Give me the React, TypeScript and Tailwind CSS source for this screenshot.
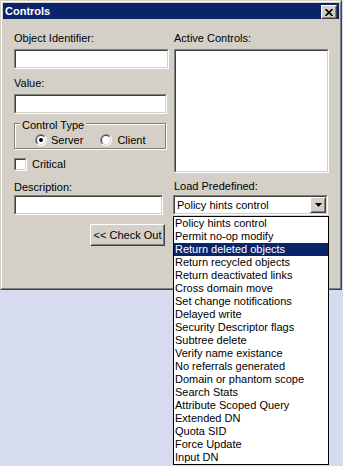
import React from "react";

const items = [
  "Policy hints control",
  "Permit no-op modify",
  "Return deleted objects",
  "Return recycled objects",
  "Return deactivated links",
  "Cross domain move",
  "Set change notifications",
  "Delayed write",
  "Security Descriptor flags",
  "Subtree delete",
  "Verify name existance",
  "No referrals generated",
  "Domain or phantom scope",
  "Search Stats",
  "Attribute Scoped Query",
  "Extended DN",
  "Quota SID",
  "Force Update",
  "Input DN",
];

function Sunken({ className = "", children }: { className?: string; children?: React.ReactNode }) {
  return (
    <div className={`border border-t-[#808080] border-l-[#808080] border-b-white border-r-white ${className}`}>
      <div className="h-full border border-t-[#404040] border-l-[#404040] border-b-[#d4d0c8] border-r-[#d4d0c8] bg-white">
        {children}
      </div>
    </div>
  );
}

function Raised({ className = "", children }: { className?: string; children?: React.ReactNode }) {
  return (
    <div className={`border border-t-white border-l-white border-b-[#404040] border-r-[#404040] bg-[#d4d0c8] ${className}`}>
      <div className="h-full border border-t-[#d4d0c8] border-l-[#d4d0c8] border-b-[#808080] border-r-[#808080] flex items-center justify-center">
        {children}
      </div>
    </div>
  );
}

function Radio({ checked, id }: { checked?: boolean; id: string }) {
  return (
    <svg width="12" height="12" viewBox="0 0 12 12" className="shrink-0">
      <defs>
        <clipPath id={id}>
          <polygon points="0,0 12,0 0,12" />
        </clipPath>
      </defs>
      <circle cx="6" cy="6" r="6" fill="#ffffff" />
      <circle cx="6" cy="6" r="6" fill="#808080" clipPath={`url(#${id})`} />
      <circle cx="6" cy="6" r="5" fill="#d4d0c8" />
      <circle cx="6" cy="6" r="5" fill="#404040" clipPath={`url(#${id})`} />
      <circle cx="6" cy="6" r="4" fill="#ffffff" />
      {checked && <circle cx="6" cy="6" r="2" fill="#000000" />}
    </svg>
  );
}

export default function App() {
  return (
    <div className="w-[343px] h-[466px] overflow-hidden bg-[#d6dbf0] font-['Tahoma','Liberation_Sans',sans-serif] text-[11px] leading-[13px] text-black">
      {/* window frame */}
      <div className="w-[342px] h-[290px] border border-t-[#d4d0c8] border-l-[#d4d0c8] border-b-[#404040] border-r-[#404040]">
        <div className="h-full border border-t-white border-l-white border-b-[#808080] border-r-[#808080] bg-[#d4d0c8] p-px flex flex-col">
          <div className="h-[16px] bg-[#0a246a] flex items-center justify-between pl-[2px] pr-[2px]">
            <span className="text-white font-bold leading-[16px]">Controls</span>
            <Raised className="w-[16px] h-[14px] mt-[2px]">
              <svg width="8" height="7" viewBox="0 0 8 7">
                <path d="M0.5 0 L7.5 7 M7.5 0 L0.5 7" stroke="#000" strokeWidth="1.6" />
              </svg>
            </Raised>
          </div>

          <div className="flex pl-[11px] pt-[13px]">
            {/* left column */}
            <div className="flex flex-col w-[159px]">
              <span>Object Identifier:</span>
              <Sunken className="mt-[4px] w-[155px] h-[20px]" />
              <span className="mt-[8px]">Value:</span>
              <Sunken className="mt-[4px] w-[153px] h-[20px]" />

              <div className="relative mt-[9px] w-[152px] h-[26px] border border-[#808080] shadow-[inset_1px_1px_0_#fff,1px_1px_0_#fff]">
                <span className="absolute left-[5px] -top-[5px] px-[2px] bg-[#d4d0c8]">Control Type</span>
                <div className="flex items-center h-full pt-[8px] pl-[20px]">
                  <Radio checked id="r1" />
                  <span className="ml-[4px]">Server</span>
                  <span className="ml-[17px] flex items-center">
                    <Radio id="r2" />
                    <span className="ml-[5px]">Client</span>
                  </span>
                </div>
              </div>

              <div className="mt-[9px] flex items-center h-[13px]">
                <Sunken className="w-[13px] h-[13px]" />
                <span className="ml-[5px]">Critical</span>
              </div>

              <span className="mt-[10px]">Description:</span>
              <Sunken className="mt-[1px] w-[149px] h-[20px]" />

              <Raised className="mt-[9px] ml-[76px] w-[75px] h-[22px]">
                <span>&lt;&lt; Check Out</span>
              </Raised>
            </div>

            {/* right column */}
            <div className="flex flex-col w-[157px]">
              <span className="ml-[1px]">Active Controls:</span>
              <Sunken className="mt-[4px] ml-[1px] w-[155px] h-[124px]" />
              <span className="mt-[7px] ml-[1px]">Load Predefined:</span>
              <div className="relative mt-[2px]">
                <Sunken className="w-[155px] h-[20px]">
                  <div className="flex h-full items-center justify-between">
                    <span className="pl-[2px]">Policy hints control</span>
                    <Raised className="w-[16px] h-[16px]">
                      <svg width="7" height="4" viewBox="0 0 7 4">
                        <polygon points="0,0 7,0 3.5,4" fill="#000" />
                      </svg>
                    </Raised>
                  </div>
                </Sunken>
                <div className="absolute left-0 top-[21px] w-[156px] border border-black bg-white z-10">
                  {items.map((it) => (
                    <div
                      key={it}
                      className={`h-[13px] pl-[1px] whitespace-nowrap ${
                        it === "Return deleted objects" ? "bg-[#0a246a] text-white" : ""
                      }`}
                    >
                      {it}
                    </div>
                  ))}
                </div>
              </div>
            </div>
          </div>
        </div>
      </div>
    </div>
  );
}
